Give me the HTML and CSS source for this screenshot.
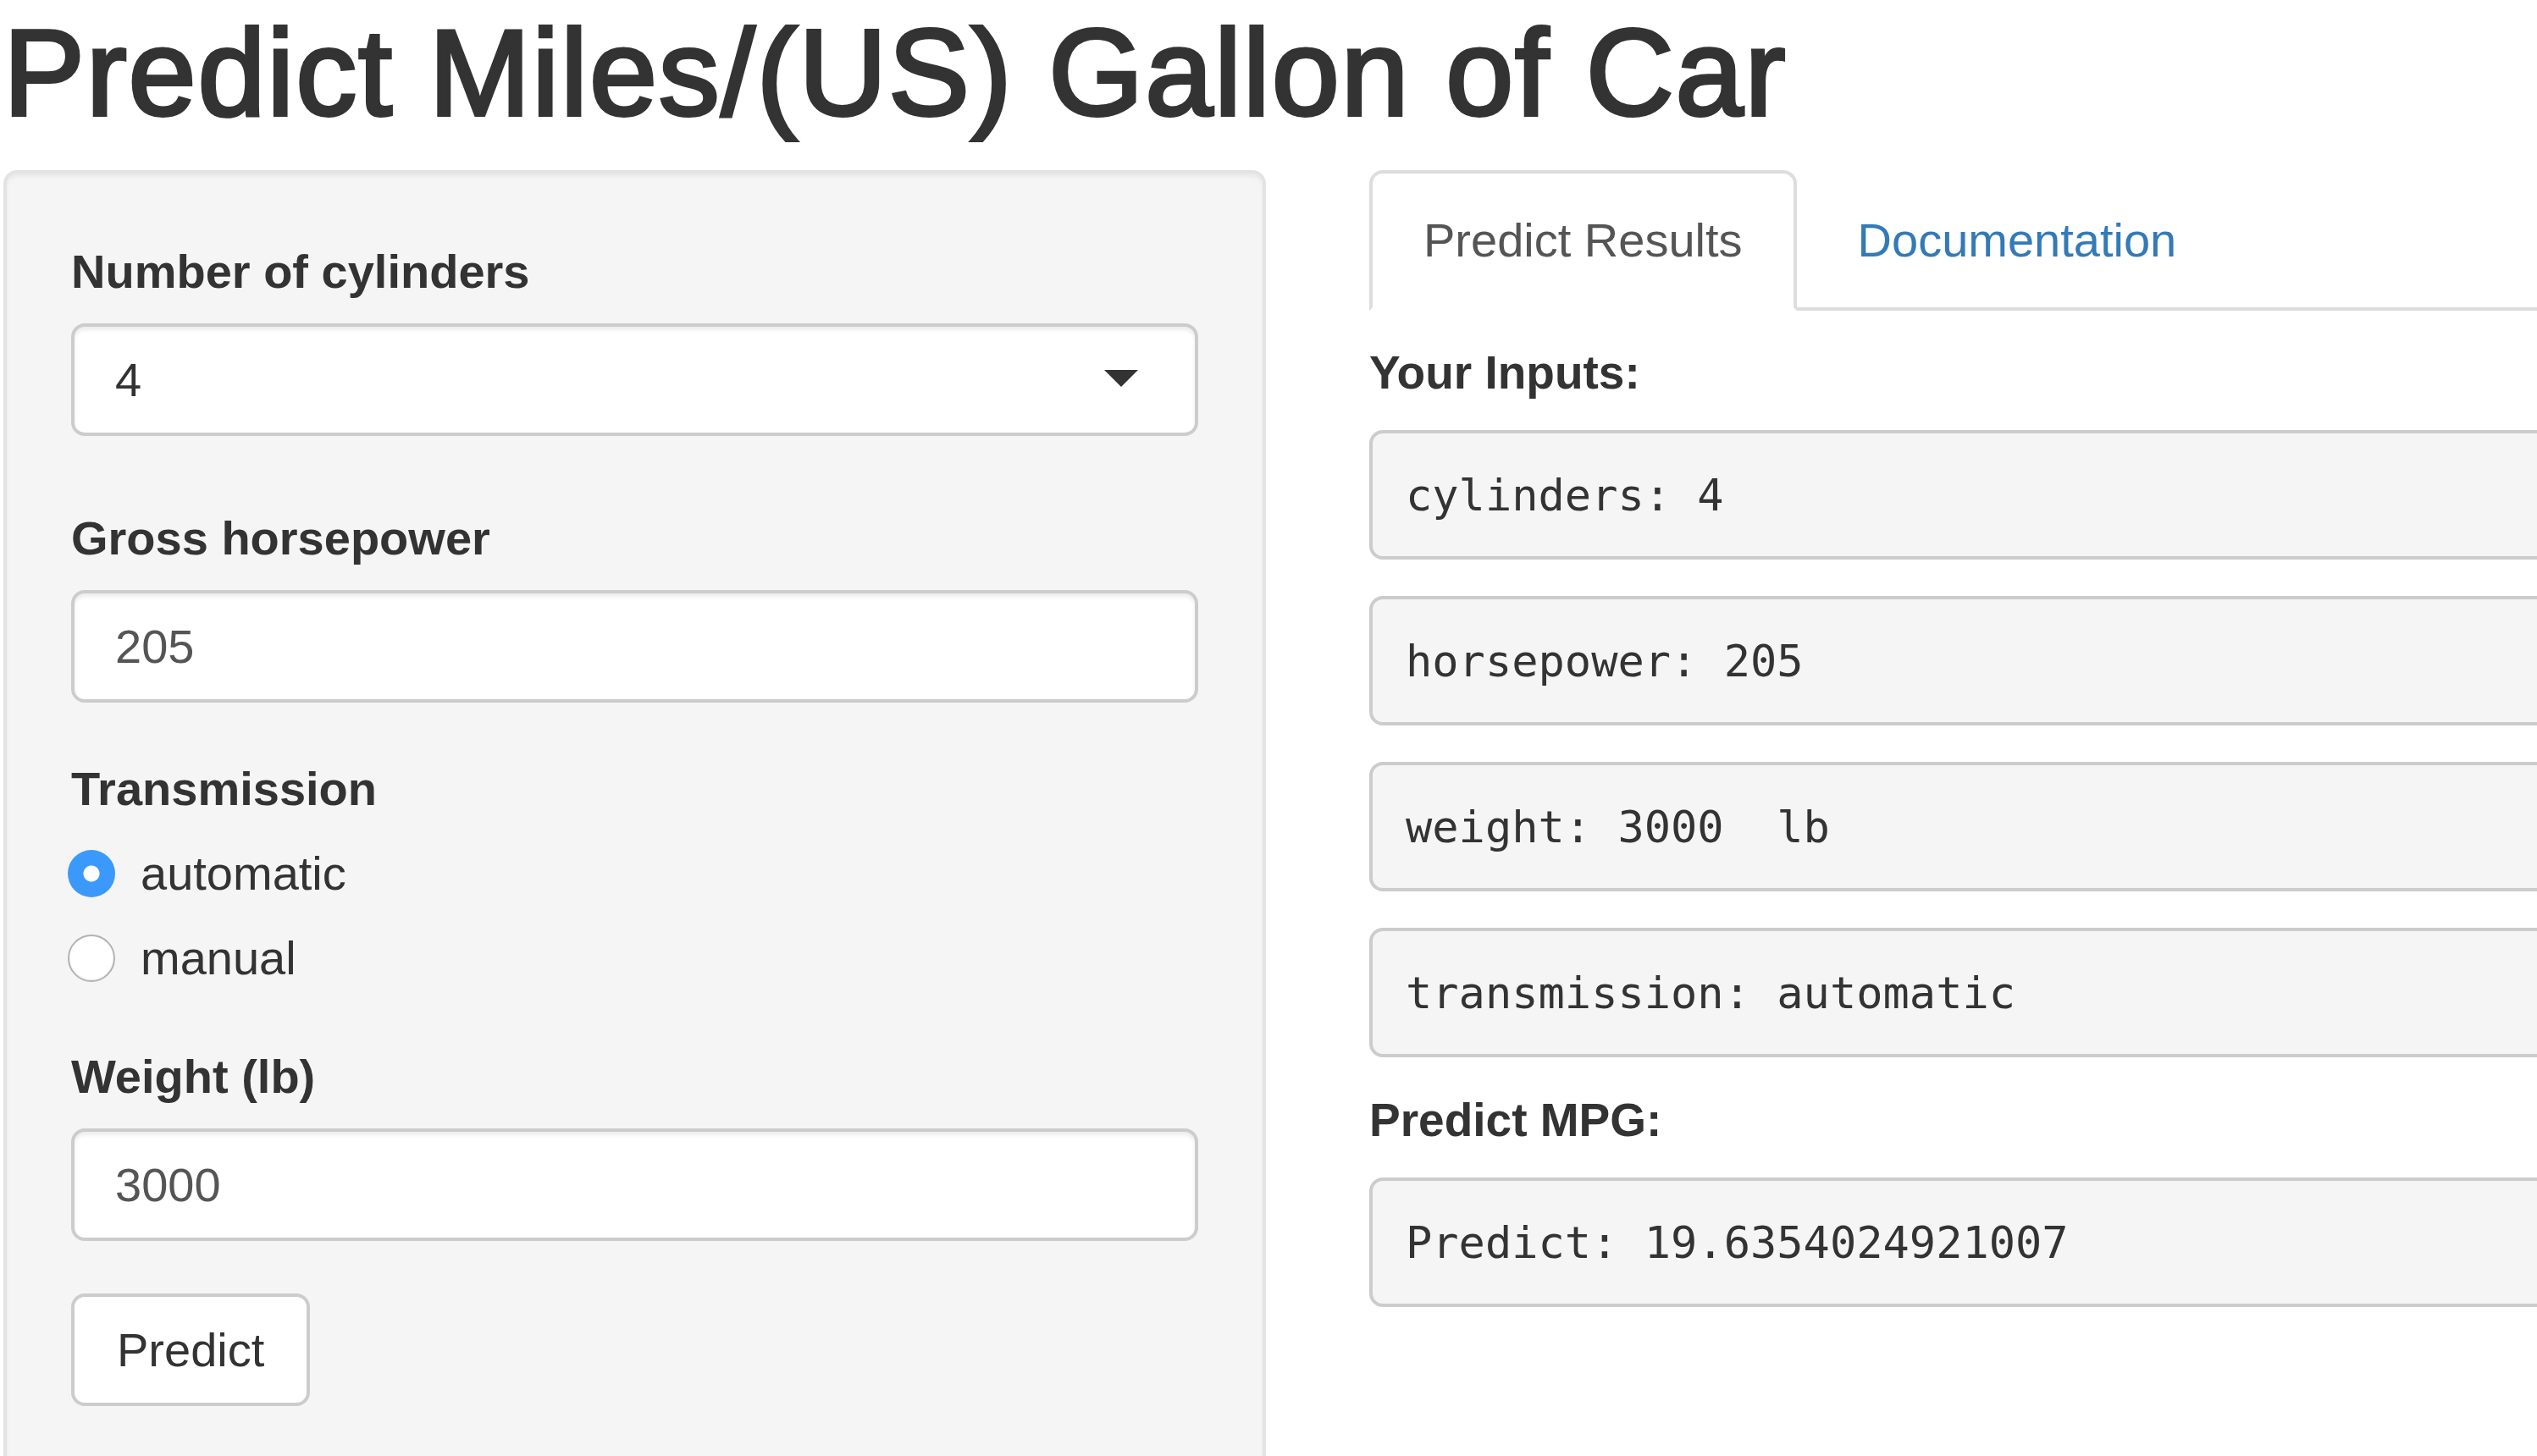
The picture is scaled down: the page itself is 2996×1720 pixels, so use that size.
FILE: index.html
```html
<!DOCTYPE html>
<html lang="en">
<head>
<meta charset="utf-8">
<title>Predict Miles/(US) Gallon of Car</title>
<link rel="stylesheet" href="styles.css">
</head>
<body>
<div class="page">
  <h1 class="title">Predict Miles/(US) Gallon of Car</h1>
  <div class="layout">
    <aside class="sidebar">
      <form class="well">
        <div class="form-group group-select">
          <label class="control-label">Number of cylinders</label>
          <div class="select-box"><span class="select-value">4</span><span class="caret"></span></div>
        </div>
        <div class="form-group">
          <label class="control-label" for="hp">Gross horsepower</label>
          <input class="text-input" id="hp" type="text" value="205">
        </div>
        <div class="form-group group-radio">
          <label class="control-label">Transmission</label>
          <div class="radio-list">
            <label class="radio"><input type="radio" name="am" checked><span>automatic</span></label>
            <label class="radio"><input type="radio" name="am"><span>manual</span></label>
          </div>
        </div>
        <div class="form-group">
          <label class="control-label" for="wt">Weight (lb)</label>
          <input class="text-input" id="wt" type="text" value="3000">
        </div>
        <button class="btn" type="button">Predict</button>
      </form>
    </aside>
    <main class="main">
      <ul class="nav-tabs">
        <li class="active"><a href="#">Predict Results</a></li>
        <li><a href="#">Documentation</a></li>
      </ul>
      <div class="tab-pane">
        <h5 class="out-title">Your Inputs:</h5>
        <pre class="output">cylinders: 4</pre>
        <pre class="output">horsepower: 205</pre>
        <pre class="output">weight: 3000  lb</pre>
        <pre class="output output-end">transmission: automatic</pre>
        <h5 class="out-title">Predict MPG:</h5>
        <pre class="output">Predict: 19.6354024921007</pre>
      </div>
    </main>
  </div>
</div>
</body>
</html>
```

FILE: styles.css
```css
html, body {
  margin: 0;
  padding: 0;
  background: #fff;
  overflow: hidden;
}

body {
  width: 2996px;
  height: 1720px;
  font-family: "Liberation Sans", Arial, Helvetica, sans-serif;
  font-size: 56px;
  line-height: 80px;
  color: #333;
}

.page {
  padding-left: 4px;
}

.title {
  margin: 0;
  padding-top: 8px;
  font-size: 144px;
  line-height: 158px;
  font-weight: normal;
  letter-spacing: 1.8px;
  color: #333;
  -webkit-text-stroke: 4px #333;
  white-space: nowrap;
}

.layout {
  display: flex;
  align-items: flex-start;
  gap: 122px;
  margin-top: 35px;
}

.sidebar {
  flex: 0 0 1491px;
}

.well {
  box-sizing: border-box;
  background: #f5f5f5;
  border: 4px solid #e3e3e3;
  border-radius: 16px;
  padding: 76px;
  box-shadow: inset 0 4px 4px rgba(0, 0, 0, 0.05);
}

.form-group {
  margin-bottom: 62px;
}

.group-select {
  margin-bottom: 81px;
}

.group-radio {
  margin-bottom: 60px;
}

.control-label {
  display: block;
  font-weight: bold;
  margin-bottom: 21px;
}

.group-radio .control-label {
  margin-bottom: 20px;
}

.select-box {
  box-sizing: border-box;
  height: 133px;
  display: flex;
  align-items: center;
  justify-content: space-between;
  padding: 0 67px 0 48px;
  background: #fff;
  border: 4px solid #ccc;
  border-radius: 16px;
  box-shadow: inset 0 4px 4px rgba(0, 0, 0, 0.075);
  color: #333;
}

.caret {
  width: 0;
  height: 0;
  border-left: 20px solid transparent;
  border-right: 20px solid transparent;
  border-top: 20px solid #333;
  margin-top: -4px;
}

.text-input {
  display: block;
  box-sizing: border-box;
  width: 100%;
  height: 133px;
  margin: 0;
  padding: 0 48px;
  font: inherit;
  color: #555;
  background: #fff;
  border: 4px solid #ccc;
  border-radius: 16px;
  box-shadow: inset 0 4px 4px rgba(0, 0, 0, 0.075);
  outline: none;
}

.radio-list {
  display: flex;
  flex-direction: column;
  gap: 20px;
}

.radio {
  display: flex;
  align-items: center;
  gap: 30px;
  margin-left: -4px;
  line-height: 80px;
  font-weight: normal;
}

.radio input {
  -webkit-appearance: none;
  appearance: none;
  box-sizing: border-box;
  width: 56px;
  height: 56px;
  margin: 0;
  border-radius: 50%;
  background: #fff;
  border: 2px solid #b3b3b3;
  box-shadow: inset 0 -1px 2px rgba(0, 0, 0, 0.08);
}

.radio input:checked {
  border: none;
  background: radial-gradient(circle, #fff 0 9px, #3b99fc 10px);
  box-shadow: none;
}

.btn {
  box-sizing: border-box;
  height: 133px;
  margin: 0;
  padding: 0 50px;
  font: inherit;
  line-height: 80px;
  color: #333;
  background: #fff;
  border: 4px solid #ccc;
  border-radius: 16px;
}

.main {
  flex: 0 0 1500px;
}

.nav-tabs {
  display: flex;
  list-style: none;
  margin: 0;
  padding: 0;
  border-bottom: 4px solid #ddd;
}

.nav-tabs li {
  margin: 0 8px -4px 0;
}

.nav-tabs a {
  display: block;
  padding: 39px 60px;
  line-height: 80px;
  border: 4px solid transparent;
  border-radius: 16px 16px 0 0;
  color: #337ab7;
  text-decoration: none;
}

.nav-tabs li.active a {
  color: #555;
  background: #fff;
  border-color: #ddd #ddd transparent;
}

.tab-pane {
  display: flex;
  flex-direction: column;
  padding-top: 33px;
}

.out-title {
  margin: 0 0 28px;
  font-size: 55px;
  line-height: 80px;
  font-weight: bold;
  color: #333;
}

.output {
  margin: 0 0 43px;
  padding: 35.5px 39px;
  font-family: "DejaVu Sans Mono", "Liberation Mono", monospace;
  font-size: 52px;
  line-height: 74px;
  color: #333;
  background: #f5f5f5;
  border: 4px solid #ccc;
  border-radius: 16px;
  white-space: pre;
}

.output-end {
  margin-bottom: 34px;
}
```
